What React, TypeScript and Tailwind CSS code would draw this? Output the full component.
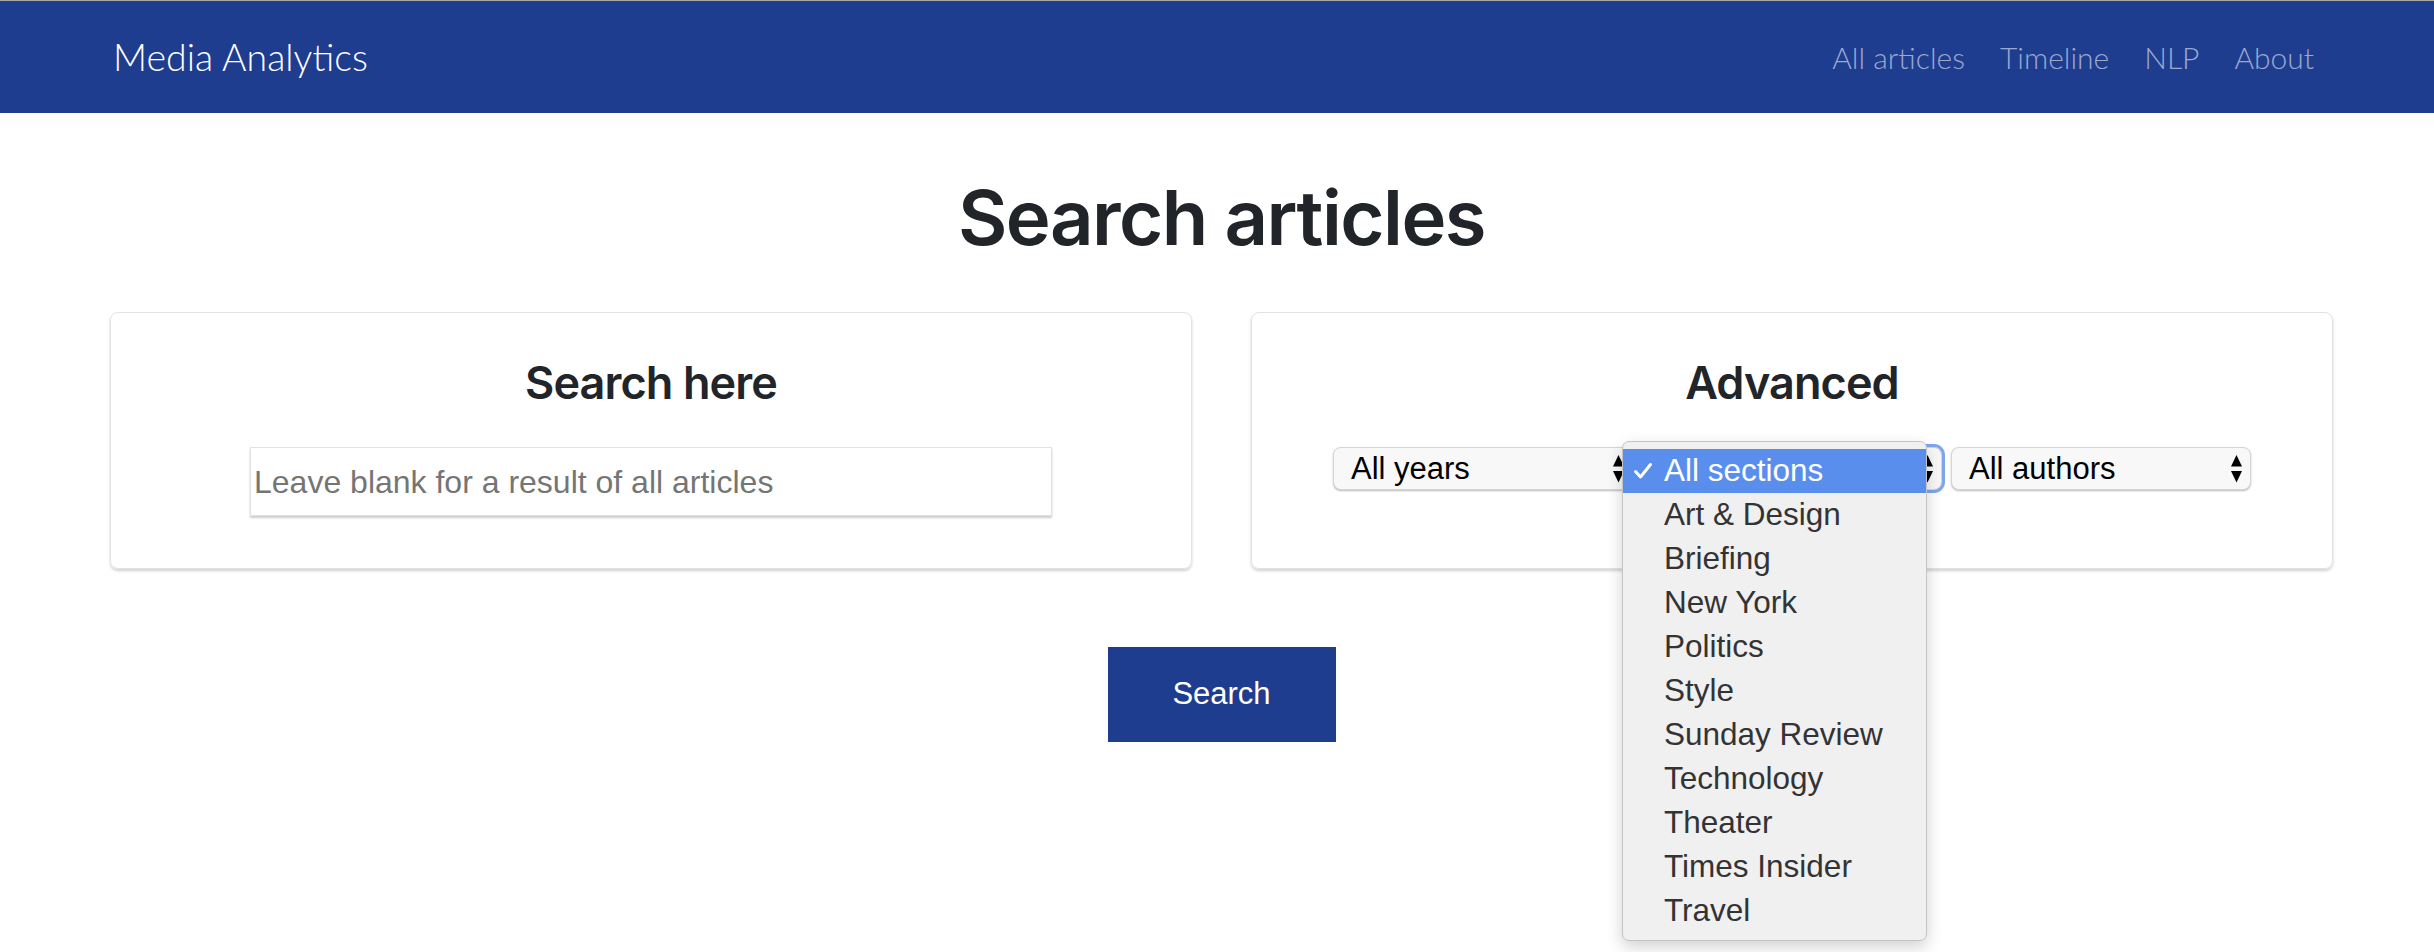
import React from "react";

const sections = [
  "All sections",
  "Art & Design",
  "Briefing",
  "New York",
  "Politics",
  "Style",
  "Sunday Review",
  "Technology",
  "Theater",
  "Times Insider",
  "Travel",
];

function Arrows() {
  return (
    <svg width="11" height="28" viewBox="0 0 11 28" className="shrink-0">
      <polygon points="5.5,0 11,11.5 0,11.5" fill="#000" />
      <polygon points="0,16 11,16 5.5,27.5" fill="#000" />
    </svg>
  );
}

function FakeSelect({ label, focused, children }: { label: string; focused?: boolean; children?: React.ReactNode }) {
  return (
    <div
      className={
        "relative w-[300px] h-[43px] rounded-[8px] border border-[#d6d6d6] bg-[#f8f8f8] shadow-[0_1px_2px_rgba(0,0,0,0.28)] flex items-center justify-between pl-[17px] pr-[8px] text-[31px] text-black font-['Liberation_Sans',Arial,sans-serif] " +
        (focused ? "outline outline-[3px] outline-[#7ea6ee]" : "")
      }
    >
      <span className="leading-none">{label}</span>
      <Arrows />
      {children}
    </div>
  );
}

export default function App() {
  return (
    <div className="min-h-[952px] bg-white">
      <header className="h-[113px] border-t border-[#a8a8a8] bg-[#1f3d8e] flex items-center justify-between pl-[113px] pr-[120px]">
        <span className="font-['Lato',sans-serif] font-light text-[37.5px] text-white">Media Analytics</span>
        <nav className="flex gap-[35px] font-['Lato',sans-serif] font-light text-[30px] text-[#9ba8d0]">
          <a>All articles</a>
          <a>Timeline</a>
          <a>NLP</a>
          <a>About</a>
        </nav>
      </header>

      <main className="pl-[110px] pr-[101px]">
        <h1 className="mt-[59px] text-center font-['Inter',sans-serif] font-semibold text-[76px] leading-[91px] tracking-[-0.02em] text-[#212529]">
          Search articles
        </h1>

        <div className="mt-[49px] grid grid-cols-2 gap-[59px]">
          <section className="rounded-[8px] border border-[#e3e3e3] shadow-[0_2px_3px_rgba(0,0,0,0.18)] pt-[43px] pb-[52px] flex flex-col items-center">
            <h2 className="font-['Inter',sans-serif] font-semibold text-[45px] leading-[54px] tracking-[-0.02em] text-[#212529]">
              Search here
            </h2>
            <input
              className="mt-[37px] w-[802px] h-[69px] border border-[#e2e2e2] shadow-[0_2px_2px_rgba(0,0,0,0.2)] pl-[3px] pt-[2px] text-[32px] text-black placeholder:text-[#757575] font-['Liberation_Sans',Arial,sans-serif] outline-none"
              placeholder="Leave blank for a result of all articles"
            />
          </section>

          <section className="rounded-[8px] border border-[#e3e3e3] shadow-[0_2px_3px_rgba(0,0,0,0.18)] pt-[43px] pb-[52px] flex flex-col items-center">
            <h2 className="font-['Inter',sans-serif] font-semibold text-[45px] leading-[54px] tracking-[-0.02em] text-[#212529]">
              Advanced
            </h2>
            <div className="mt-[37px] flex gap-[9px]">
              <FakeSelect label="All years" />
              <FakeSelect label="All sections" focused>
                <div className="absolute left-[-21px] top-[-7px] z-10 w-[305px] rounded-[7px] border border-[#c4c4c4] bg-[#f0f0f1] shadow-[0_6px_16px_rgba(0,0,0,0.18)] pt-[7px] pb-[7px] font-['Liberation_Sans',Arial,sans-serif] text-[31.5px]">
                  {sections.map((s, i) => (
                    <div
                      key={s}
                      className={
                        "flex items-center h-[44px] " +
                        (i === 0 ? "bg-[#5a8eec] text-white" : "text-[#333333]")
                      }
                    >
                      <span className="w-[41px] pl-[10px] flex items-center">
                        {i === 0 && (
                          <svg width="20" height="18" viewBox="0 0 20 18">
                            <path d="M2.5 9.5 L7.5 15 L17.5 2.5" fill="none" stroke="#fff" strokeWidth="3" strokeLinecap="round" strokeLinejoin="round" />
                          </svg>
                        )}
                      </span>
                      <span className="leading-none">{s}</span>
                    </div>
                  ))}
                </div>
              </FakeSelect>
              <FakeSelect label="All authors" />
            </div>
          </section>
        </div>

        <div className="mt-[78px] flex justify-center">
          <button className="w-[228px] h-[95px] bg-[#1f3d8e] text-white text-[31px] font-['Liberation_Sans',Arial,sans-serif]">
            Search
          </button>
        </div>
      </main>
    </div>
  );
}
